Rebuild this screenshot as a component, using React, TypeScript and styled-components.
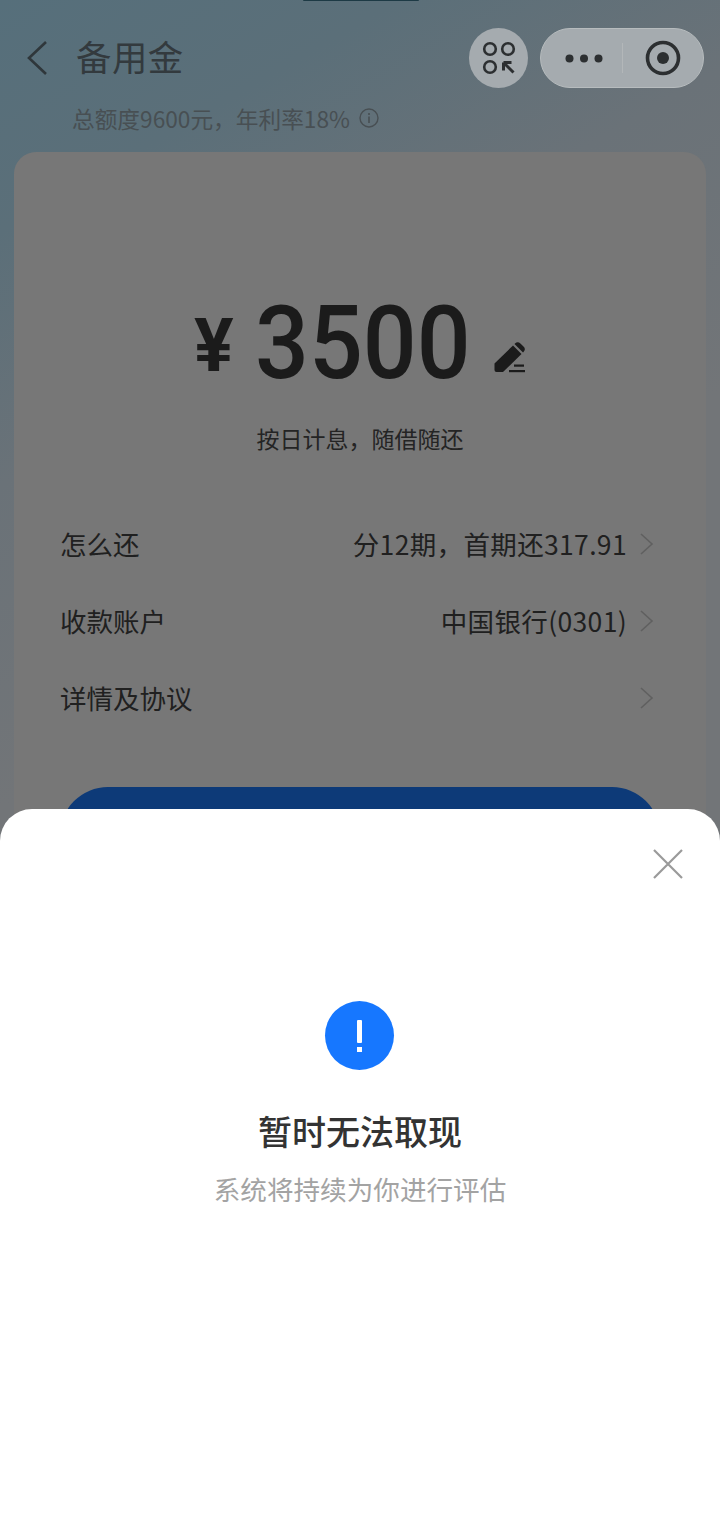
import React from "react";
import styled, { createGlobalStyle } from "styled-components";

const GlobalStyle = createGlobalStyle`
  html, body {
    margin: 0;
    padding: 0;
    background: #fff;
  }
  * {
    box-sizing: border-box;
  }
`;

const Page = styled.div`
  position: relative;
  width: 720px;
  height: 1538px;
  overflow: hidden;
  background: linear-gradient(150deg, #566f7b 0, #5b6f79 200px, #6a7278 420px, #727578 700px);
  font-family: "Noto Sans CJK SC", "Noto Sans", sans-serif;
`;

const Notch = styled.div`
  position: absolute;
  top: 0;
  left: 303px;
  width: 116px;
  height: 1px;
  background: #1d3a45;
  border-radius: 0 0 4px 4px;
`;

const Header = styled.header`
  height: 101px;
  padding: 28px 16px 0 24px;
  display: flex;
  align-items: flex-start;
  justify-content: space-between;
`;

const TitleGroup = styled.div`
  height: 60px;
  display: flex;
  align-items: center;
  gap: 28px;
`;

const BackIcon = styled.svg`
  width: 25px;
  height: 36px;
  flex-shrink: 0;
`;

const Title = styled.h1`
  margin: -4px 0 0 -1px;
  font-size: 35.4px;
  line-height: 60px;
  font-weight: 400;
  color: #333a3e;
  letter-spacing: 0.5px;
`;

const Capsules = styled.div`
  display: flex;
  gap: 12px;
`;

const RoundButton = styled.div`
  width: 59px;
  height: 60px;
  border-radius: 50%;
  background: #a5abaf;
  display: flex;
  align-items: center;
  justify-content: center;
`;

const Capsule = styled.div`
  width: 164px;
  height: 60px;
  border-radius: 30px;
  background: #a5abaf;
  border: 1px solid #b7bcbe;
  display: flex;
  align-items: center;
`;

const CapsuleSide = styled.div`
  flex: 1;
  height: 100%;
  display: flex;
  align-items: center;
  justify-content: center;
`;

const DotsIcon = styled.svg`
  margin-left: 6px;
`;

const CapsuleDivider = styled.div`
  width: 1px;
  height: 30px;
  background: #b3b7b9;
`;

const Subtitle = styled.div`
  height: 34px;
  margin-bottom: 17px;
  padding-left: 72px;
  display: flex;
  align-items: center;
  gap: 9px;
  font-size: 22.7px;
  color: #484f53;
`;

const Card = styled.section`
  margin: 0 14px;
  height: 800px;
  padding-top: 130px;
  border-radius: 22px;
  background: #777;
`;

const AmountRow = styled.div`
  height: 120px;
  display: flex;
  align-items: center;
  padding-left: 180px;
  color: #1b1b1b;
`;

const Currency = styled.span`
  width: 61px;
  font-family: "Roboto", sans-serif;
  font-size: 74px;
  font-weight: 700;
  line-height: 1;
  margin-top: 8px;
`;

const Amount = styled.span`
  display: inline-block;
  width: 216px;
  margin-top: 1px;
  font-family: "Roboto", sans-serif;
  font-size: 102px;
  font-weight: 500;
  line-height: 1;
  white-space: nowrap;
  transform: scaleX(0.93);
  transform-origin: left center;
`;

const EditIcon = styled.svg`
  width: 32px;
  height: 32px;
  margin: 30px 0 0 23px;
`;

const AmountHint = styled.p`
  margin: 19px 0 50px;
  text-align: center;
  font-size: 23px;
  line-height: 34px;
  color: #242424;
`;

const Row = styled.div`
  height: 77px;
  padding: 0 51px 0 46px;
  display: flex;
  align-items: center;
  justify-content: space-between;
  font-size: 26.5px;
  color: #202020;
`;

const RowValue = styled.div`
  display: flex;
  align-items: center;
  gap: 12px;
  letter-spacing: 0.35px;
`;

const Chevron = styled.svg`
  width: 15px;
  height: 24px;
  margin-right: 1px;
`;

const SubmitButton = styled.div`
  margin: 51px 46px 0;
  height: 96px;
  border-radius: 48px;
  background: #0d3a78;
`;

const Sheet = styled.section`
  position: absolute;
  left: 0;
  right: 0;
  top: 809px;
  bottom: 0;
  background: #fff;
  border-radius: 32px 32px 0 0;
  padding-top: 192px;
  display: flex;
  flex-direction: column;
  align-items: center;
`;

const CloseIcon = styled.svg`
  position: absolute;
  top: 39px;
  right: 36px;
  width: 32px;
  height: 32px;
`;

const AlertCircle = styled.div`
  width: 69px;
  height: 69px;
  margin-left: -1px;
  border-radius: 50%;
  background: #1677ff;
  display: flex;
  flex-direction: column;
  align-items: center;
  justify-content: center;
  gap: 4px;
`;

const AlertBar = styled.span`
  width: 5px;
  height: 23px;
  background: #fff;
  border-radius: 1px;
`;

const AlertDot = styled.span`
  width: 5px;
  height: 5px;
  background: #fff;
`;

const SheetTitle = styled.h2`
  margin: 36px 0 0;
  font-size: 34px;
  line-height: 50px;
  font-weight: 500;
  color: #333;
`;

const SheetText = styled.p`
  margin: 13px 0 0;
  font-size: 26.6px;
  line-height: 40px;
  color: #a3a3a3;
`;

const RowChevron = () => (
  <Chevron viewBox="0 0 15 24" fill="none">
    <path d="M2 2l11 10L2 22" stroke="#606060" strokeWidth="1.6" />
  </Chevron>
);

const App = () => {
  return (
    <Page>
      <GlobalStyle />
      <Notch />
      <Header>
        <TitleGroup>
          <BackIcon viewBox="0 0 25 36" fill="none">
            <path d="M22 2L5 18l17 16" stroke="#2f373b" strokeWidth="2.6" />
          </BackIcon>
          <Title>备用金</Title>
        </TitleGroup>
        <Capsules>
          <RoundButton>
            <svg width="34" height="34" viewBox="0 0 34 34" fill="none">
              <circle cx="8" cy="8" r="5.8" stroke="#2c2f31" strokeWidth="2.6" />
              <circle cx="26" cy="8" r="5.8" stroke="#2c2f31" strokeWidth="2.6" />
              <circle cx="8" cy="26" r="5.8" stroke="#2c2f31" strokeWidth="2.6" />
              <path d="M21.5 21.5h8M21.5 21.5v8M21.5 21.5l10 10" stroke="#2c2f31" strokeWidth="3" />
            </svg>
          </RoundButton>
          <Capsule>
            <CapsuleSide>
              <DotsIcon width="38" height="9" viewBox="0 0 38 9">
                <circle cx="4.5" cy="4.5" r="4" fill="#2c2f31" />
                <circle cx="19" cy="4.5" r="4" fill="#2c2f31" />
                <circle cx="33.5" cy="4.5" r="4" fill="#2c2f31" />
              </DotsIcon>
            </CapsuleSide>
            <CapsuleDivider />
            <CapsuleSide>
              <svg width="36" height="36" viewBox="0 0 36 36" fill="none">
                <circle cx="18" cy="18" r="15.5" stroke="#2c2f31" strokeWidth="3.6" />
                <circle cx="18" cy="18" r="6" fill="#2c2f31" />
              </svg>
            </CapsuleSide>
          </Capsule>
        </Capsules>
      </Header>
      <Subtitle>
        总额度9600元，年利率18%
        <svg width="20" height="20" viewBox="0 0 20 20" fill="none">
          <circle cx="10" cy="10" r="9" stroke="#484f53" strokeWidth="1.4" />
          <path d="M10 8.5V15M10 5v2" stroke="#484f53" strokeWidth="1.6" />
        </svg>
      </Subtitle>
      <Card>
        <AmountRow>
          <Currency>¥</Currency>
          <Amount>3500</Amount>
          <EditIcon viewBox="0 0 32 32">
            <path
              d="M0.5 22.5L19 4.5l8.5 8.5L9 31H2.5a2 2 0 0 1-2-2z"
              fill="#1b1b1b"
            />
            <path d="M21 2.5a3.8 3.8 0 0 1 5.4 0l3.1 3.1a3.8 3.8 0 0 1 0 5.4l-.5.5-8.5-8.5z" fill="#1b1b1b" />
            <rect x="20" y="23.5" width="10" height="2.2" fill="#1b1b1b" />
            <rect x="15" y="29" width="16" height="2.2" fill="#1b1b1b" />
          </EditIcon>
        </AmountRow>
        <AmountHint>按日计息，随借随还</AmountHint>
        <Row>
          <span>怎么还</span>
          <RowValue>
            分12期，首期还317.91
            <RowChevron />
          </RowValue>
        </Row>
        <Row>
          <span>收款账户</span>
          <RowValue>
            中国银行(0301)
            <RowChevron />
          </RowValue>
        </Row>
        <Row>
          <span>详情及协议</span>
          <RowValue>
            <RowChevron />
          </RowValue>
        </Row>
        <SubmitButton />
      </Card>
      <Sheet>
        <CloseIcon viewBox="0 0 32 32" fill="none">
          <path d="M2 2l28 28M30 2L2 30" stroke="#9a9a9a" strokeWidth="2.2" />
        </CloseIcon>
        <AlertCircle>
          <AlertBar />
          <AlertDot />
        </AlertCircle>
        <SheetTitle>暂时无法取现</SheetTitle>
        <SheetText>系统将持续为你进行评估</SheetText>
      </Sheet>
    </Page>
  );
};

export default App;
